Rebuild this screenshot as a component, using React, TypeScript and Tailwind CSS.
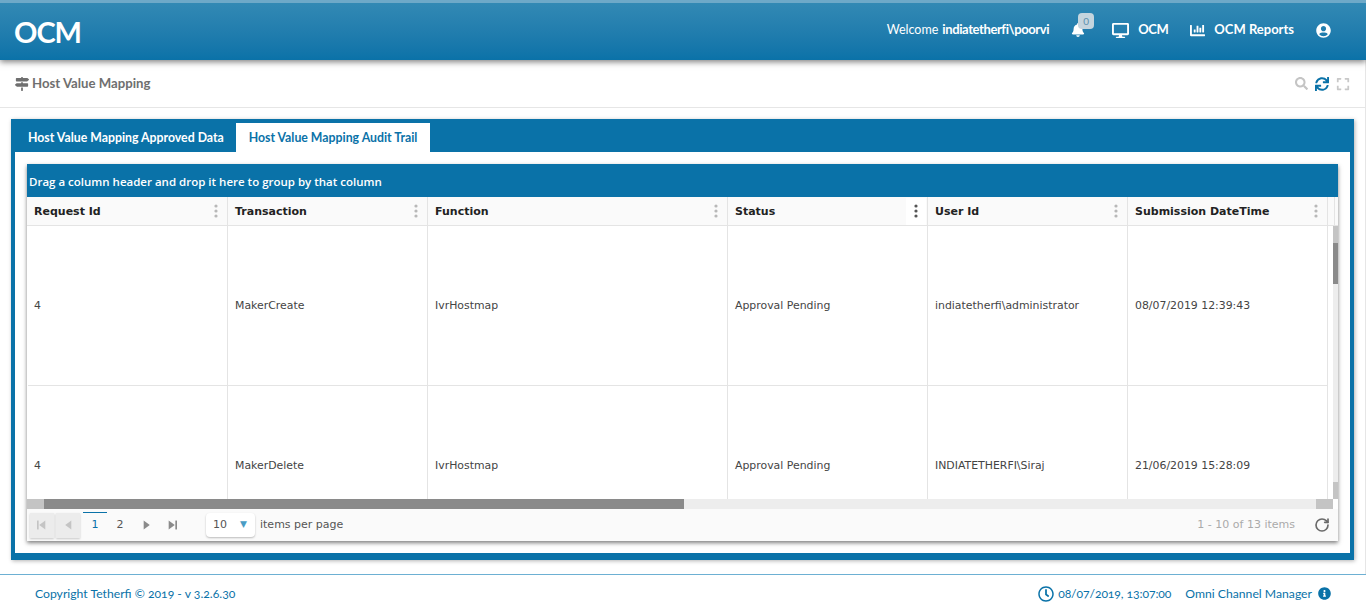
import { RotateCw } from 'lucide-react';
import {
  FaBell,
  FaChartBar,
  FaDesktop,
  FaExpand,
  FaInfoCircle,
  FaMapSigns,
  FaRegClock,
  FaSearch,
  FaSync,
  FaUserCircle,
} from 'react-icons/fa';

const columns = [
  { label: 'Request Id', width: 'w-[200px] pl-[6px]' },
  { label: 'Transaction', width: 'w-[200px] pl-[7px]' },
  { label: 'Function', width: 'w-[300px] pl-[7px]' },
  { label: 'Status', width: 'w-[200px] pl-[7px]', active: true },
  { label: 'User Id', width: 'w-[200px] pl-[7px]' },
  { label: 'Submission DateTime', width: 'w-[200px] pl-[7px]' },
];

const rows = [
  ['4', 'MakerCreate', 'IvrHostmap', 'Approval Pending', 'indiatetherfi\\administrator', '08/07/2019 12:39:43'],
  ['4', 'MakerDelete', 'IvrHostmap', 'Approval Pending', 'INDIATETHERFI\\Siraj', '21/06/2019 15:28:09'],
];

function Kebab({ active }: { active?: boolean }) {
  return (
    <div className={`w-5 h-[27px] flex items-center justify-center ${active ? 'bg-white' : ''}`}>
      <svg width="4" height="14" viewBox="0 0 4 14" fill={active ? '#555555' : '#b8b8b8'}>
        <circle cx="2" cy="2" r="1.6" />
        <circle cx="2" cy="7" r="1.6" />
        <circle cx="2" cy="12" r="1.6" />
      </svg>
    </div>
  );
}

function PagerIcon({ dir, bar }: { dir: 'left' | 'right'; bar?: boolean }) {
  return (
    <svg width="10" height="10" viewBox="0 0 9 9" fill="currentColor">
      {dir === 'left' ? <path d="M7.5 0.5v8L2 4.5z" /> : <path d="M1.5 0.5v8l5.5-4z" />}
      {bar && (dir === 'left' ? <rect x="0" y="0.5" width="1.5" height="8" /> : <rect x="7.5" y="0.5" width="1.5" height="8" />)}
    </svg>
  );
}

export default function App() {
  return (
    <div className="w-[1366px] h-[613px] overflow-hidden bg-white flex flex-col font-['Lato',sans-serif]">
      <header className="h-[60px] shrink-0 flex items-center pb-[3px] pl-[14px] pr-[35px] border-t-[3px] border-[#6ea9c8] bg-gradient-to-b from-[#3289b4] to-[#0a72a8] shadow-[0_2px_6px_rgba(0,0,0,0.5)] z-10 text-white">
        <div className="text-[29px] font-bold leading-none tracking-[-1px] pt-[3px]">OCM</div>
        <div className="ml-auto flex items-center text-[13px] font-bold">
          <span className="font-normal text-[12.5px]">Welcome</span>
          <span className="ml-1 tracking-[-0.4px]">indiatetherfi\poorvi</span>
          <div className="relative ml-[22px] mr-[27px]">
            <FaBell size={14} />
            <span className="absolute -top-[10px] left-[7px] w-4 h-4 rounded-sm bg-[#c5d5de] text-[#5c90ad] text-[10px] font-normal flex items-center justify-center">0</span>
          </div>
          <FaDesktop size={17} />
          <span className="ml-[9px] tracking-[-0.4px]">OCM</span>
          <FaChartBar size={15} className="ml-[22px]" />
          <span className="ml-[9px]">OCM Reports</span>
          <FaUserCircle size={15} className="ml-[22px]" />
        </div>
      </header>

      <div className="h-[48px] shrink-0 flex items-center px-[15px] border-b border-r border-[#e6e6e6] text-[#6f6f6f]">
        <FaMapSigns size={14} />
        <span className="ml-[3px] pt-px text-[13.2px] font-bold">Host Value Mapping</span>
        <div className="ml-auto flex items-center gap-[7px]">
          <FaSearch size={13} className="text-[#c4c4c4]" />
          <FaSync size={14} className="text-[#0a72a8]" />
          <FaExpand size={14} className="text-[#c8c8c8]" />
        </div>
      </div>

      <main className="flex-1 min-h-0 pt-[11px] pl-[11px] pr-[11px] pb-[14px] flex flex-col border-r border-[#e6e6e6]">
        <div className="flex-1 min-h-0 bg-[#0a72a8] p-1 pb-[7px] flex flex-col shadow-[1px_1px_4px_rgba(0,0,0,0.3)]">
          <div className="h-[29px] shrink-0 flex items-end text-[12.3px] font-bold text-white">
            <div className="h-[29px] w-[221px] pl-[13px] pt-[2px] flex items-center">Host Value Mapping Approved Data</div>
            <div className="h-[29px] w-[194px] bg-white pt-[2px] text-[#0a72a8] flex items-center justify-center">Host Value Mapping Audit Trail</div>
          </div>
          <div className="flex-1 min-h-0 bg-white pt-3 px-3 flex flex-col">
            <div className="h-[377px] flex flex-col shadow-[0_2px_4px_rgba(0,0,0,0.5)] font-['DejaVu_Sans',sans-serif]">
              <div className="h-[33px] shrink-0 flex items-center pl-[2px] pt-[3px] bg-[#0a72a8] text-white text-[11.5px] font-semibold font-['Open_Sans',sans-serif]">
                Drag a column header and drop it here to group by that column
              </div>
              <div className="h-[29px] shrink-0 flex pl-px bg-[#fafafa] border-b border-[#e4e4e4] text-[11px] font-semibold text-[#222]">
                {columns.map(c => (
                  <div key={c.label} className={`${c.width} shrink-0 flex items-center justify-between pr-px border-r border-[#e4e4e4]`}>
                    <span className="pt-[2px]">{c.label}</span>
                    <Kebab active={c.active} />
                  </div>
                ))}
                <div className="w-[7px] shrink-0 border-r border-[#e4e4e4]" />
              </div>
              <div className="h-[273px] shrink-0 flex">
                <div className="flex-1 min-w-0 overflow-hidden flex flex-col pl-px">
                  {rows.map((row, i) => (
                    <div key={i} className="h-[160px] shrink-0 flex text-[10.9px] text-[#444]">
                      {row.map((cell, j) => (
                        <div key={j} className={`${columns[j].width} shrink-0 flex items-center pt-[2px] border-r border-b border-[#e4e4e4]`}>{cell}</div>
                      ))}
                    </div>
                  ))}
                </div>
                <div className="w-[5px] shrink-0 flex flex-col bg-[#ededed]">
                  <div className="h-[17px] bg-[#c4c4c4]" />
                  <div className="h-[41px] bg-[#8a8a8a]" />
                  <div className="mt-auto h-[17px] bg-[#c4c4c4]" />
                </div>
              </div>
              <div className="h-[10px] shrink-0 flex pr-[5px]">
                <div className="flex-1 flex bg-[#ededed]">
                  <div className="w-[17px] bg-[#c4c4c4]" />
                  <div className="w-[640px] bg-[#8a8a8a]" />
                  <div className="ml-auto w-[17px] bg-[#c4c4c4]" />
                </div>
              </div>
              <div className="h-[32px] shrink-0 flex items-center bg-[#fafafa] pl-[3px] pr-[8px] text-[11px] text-[#555]">
                <div className="w-6 h-[25px] flex items-center justify-center bg-[#ececec] text-[#c4c4c4] shadow-[0_1px_2px_rgba(0,0,0,0.2)]"><PagerIcon dir="left" bar /></div>
                <div className="w-6 h-[25px] ml-[2px] flex items-center justify-center bg-[#ececec] text-[#c4c4c4] shadow-[0_1px_2px_rgba(0,0,0,0.2)]"><PagerIcon dir="left" /></div>
                <div className="w-6 h-[27px] ml-[3px] border-t border-[#0a72a8] text-[#0a72a8] flex items-center justify-center">1</div>
                <div className="w-6 ml-px text-center">2</div>
                <div className="w-6 ml-[3px] flex justify-center text-[#8a8a8a]"><PagerIcon dir="right" /></div>
                <div className="w-6 ml-px flex justify-center text-[#8a8a8a]"><PagerIcon dir="right" bar /></div>
                <div className="ml-[22px] w-[49px] h-6 rounded-sm bg-white shadow-[0_1px_2px_rgba(0,0,0,0.25)] flex items-center justify-between pl-[7px] pr-2">
                  <span>10</span>
                  <span className="text-[#4a9cc4] text-[9px]">▼</span>
                </div>
                <span className="ml-[5px] pt-px">items per page</span>
                <span className="ml-auto text-[#aaa]">1 - 10 of 13 items</span>
                <RotateCw size={16} strokeWidth={2.5} className="ml-[19px] text-[#6a6a6a]" />
              </div>
            </div>
          </div>
        </div>
      </main>

      <footer className="h-[39px] shrink-0 flex items-center pl-[35px] pr-[35px] border-t border-[#6db0d3] text-[12.2px] text-[#0a72a8] [font-feature-settings:'onum']">
        <span>Copyright Tetherfi © 2019 - v 3.2.6.30</span>
        <div className="ml-auto flex items-center">
          <FaRegClock size={16} />
          <span className="ml-1 tracking-[-0.1px]">08/07/2019, 13:07:00</span>
          <span className="ml-[14px]">Omni Channel Manager</span>
          <FaInfoCircle size={13} className="ml-[6px]" />
        </div>
      </footer>
    </div>
  );
}
